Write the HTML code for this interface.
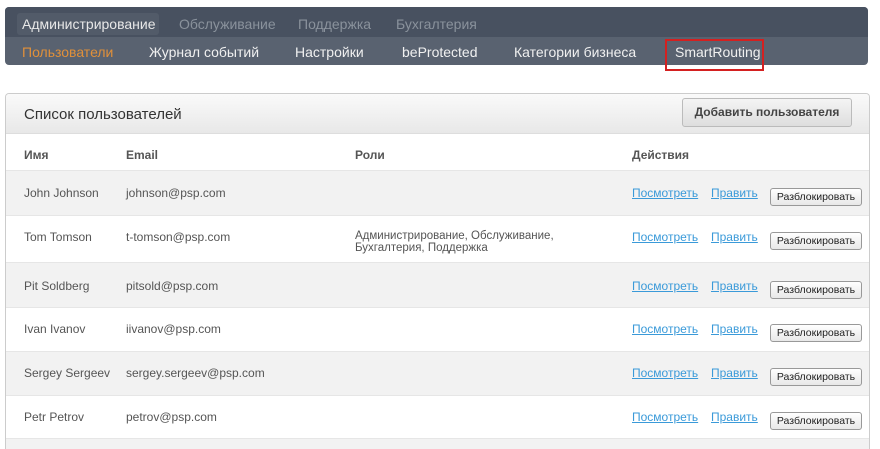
<!DOCTYPE html>
<html><head><meta charset="utf-8"><style>
*{margin:0;padding:0;box-sizing:border-box}
html,body{width:880px;height:449px;overflow:hidden}
body{background:#fff;font-family:"Liberation Sans","DejaVu Sans",sans-serif;position:relative;color:#444}
.a{position:absolute;white-space:nowrap}
.nav{position:absolute;left:5px;top:7px;width:863px;height:58px;border-radius:4px;overflow:hidden;background:#596270}
.nav .top{position:absolute;left:0;top:0;width:100%;height:30px;background:#485160}
.t1{font-size:14px;color:#8a929c;top:16px}
.t2{font-size:14px;color:#f0f0f0;top:44px}
.panel{position:absolute;left:5px;top:93px;width:865px;height:356px;border:1px solid #ccc;border-bottom:none;border-radius:4px 4px 0 0;overflow:hidden;background:#fff}
.hdr{position:absolute;left:0;top:0;width:100%;height:40px;background:linear-gradient(#fafafa,#e8e8e8);border-bottom:1px solid #ddd}
.row{position:absolute;left:0;width:100%;border-top:1px solid #e6e6e6}
.g{background:#f2f2f2}
.c{font-size:12px;color:#555}
.h{font-size:12px;color:#555;font-weight:bold}
.lk{font-size:12px;color:#3a9ad9;text-decoration:underline}
.btn{position:absolute;width:92px;height:18px;border:1px solid #999;border-radius:3px;background:linear-gradient(#fff,#e8e8e8);font-size:10.5px;color:#222;text-align:center;line-height:16px}
</style></head><body>
<div class="nav"><div class="top"></div></div>
<div class="a" style="left:17px;top:13px;width:142px;height:22px;background:#525b69;border-radius:3px"></div>
<div class="a t1" style="left:22px;color:#e8e8e8">Администрирование</div>
<div class="a t1" style="left:179px">Обслуживание</div>
<div class="a t1" style="left:298px">Поддержка</div>
<div class="a t1" style="left:396px">Бухгалтерия</div>
<div class="a t2" style="left:22px;color:#e0903a">Пользователи</div>
<div class="a t2" style="left:149px">Журнал событий</div>
<div class="a t2" style="left:295px">Настройки</div>
<div class="a t2" style="left:402px">beProtected</div>
<div class="a t2" style="left:514px">Категории бизнеса</div>
<div class="a t2" style="left:675px">SmartRouting</div>
<div class="a" style="left:665px;top:39px;width:99px;height:32px;border:2px solid #d42020"></div>

<div class="panel">
<div class="hdr"></div>
<div class="a" style="left:18px;top:12px;font-size:15px;color:#333">Список пользователей</div>
<div class="a" style="left:676px;top:4px;width:170px;height:29px;border:1px solid #bbb;border-radius:3px;background:linear-gradient(#f4f4f4,#dedede);font-size:12px;font-weight:bold;color:#444;text-align:center;line-height:27px">Добавить пользователя</div>
<div class="a h" style="left:18px;top:54px">Имя</div>
<div class="a h" style="left:120px;top:54px">Email</div>
<div class="a h" style="left:349px;top:54px">Роли</div>
<div class="a h" style="left:626px;top:54px">Действия</div>
<div class="row g" style="top:76px;height:45px"></div>
<div class="row" style="top:121px;height:47px"></div>
<div class="row g" style="top:168px;height:45px"></div>
<div class="row" style="top:213px;height:44px"></div>
<div class="row g" style="top:257px;height:44px"></div>
<div class="row" style="top:301px;height:43px"></div>
<div class="row g" style="top:344px;height:12px"></div>
</div>

<div class="a c" style="left:24px;top:186px">John Johnson</div><div class="a c" style="left:126px;top:186px">johnson@psp.com</div>
<div class="a c" style="left:24px;top:230px">Tom Tomson</div><div class="a c" style="left:126px;top:230px">t-tomson@psp.com</div>
<div class="a c" style="left:355px;top:230px;line-height:12px;font-size:11.5px">Администрирование, Обслуживание,<br>Бухгалтерия, Поддержка</div>
<div class="a c" style="left:24px;top:279px">Pit Soldberg</div><div class="a c" style="left:126px;top:279px">pitsold@psp.com</div>
<div class="a c" style="left:24px;top:322px">Ivan Ivanov</div><div class="a c" style="left:126px;top:322px">iivanov@psp.com</div>
<div class="a c" style="left:24px;top:366px">Sergey Sergeev</div><div class="a c" style="left:126px;top:366px">sergey.sergeev@psp.com</div>
<div class="a c" style="left:24px;top:410px">Petr Petrov</div><div class="a c" style="left:126px;top:410px">petrov@psp.com</div>

<div class="a lk" style="left:632px;top:186px">Посмотреть</div><div class="a lk" style="left:711px;top:186px">Править</div><div class="btn" style="left:770px;top:188px">Разблокировать</div>
<div class="a lk" style="left:632px;top:230px">Посмотреть</div><div class="a lk" style="left:711px;top:230px">Править</div><div class="btn" style="left:770px;top:232px">Разблокировать</div>
<div class="a lk" style="left:632px;top:279px">Посмотреть</div><div class="a lk" style="left:711px;top:279px">Править</div><div class="btn" style="left:770px;top:281px">Разблокировать</div>
<div class="a lk" style="left:632px;top:322px">Посмотреть</div><div class="a lk" style="left:711px;top:322px">Править</div><div class="btn" style="left:770px;top:324px">Разблокировать</div>
<div class="a lk" style="left:632px;top:366px">Посмотреть</div><div class="a lk" style="left:711px;top:366px">Править</div><div class="btn" style="left:770px;top:368px">Разблокировать</div>
<div class="a lk" style="left:632px;top:410px">Посмотреть</div><div class="a lk" style="left:711px;top:410px">Править</div><div class="btn" style="left:770px;top:412px">Разблокировать</div>
</body></html>
